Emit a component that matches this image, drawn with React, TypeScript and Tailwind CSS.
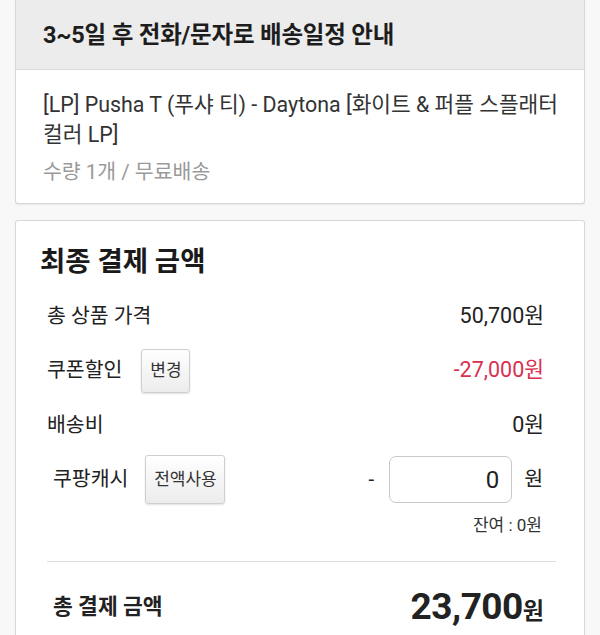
import React from 'react';

const btn =
  'rounded-[3px] border border-[#cfcfcf] bg-gradient-to-b from-white to-[#ececec] text-[17px] text-[#333] shadow-[0_1px_2px_rgba(0,0,0,0.12)] flex items-center justify-center';

export default function App() {
  return (
    <div className="min-h-screen bg-[#f8f8f8] px-[15px] font-['Roboto','Noto_Sans_CJK_KR',sans-serif] text-[#222]">
      {/* delivery card */}
      <div className="rounded-b-[3px] border border-t-0 border-[#d6d6d6] bg-white shadow-[0_1px_2px_rgba(0,0,0,0.06)]">
        <div className="flex h-[70px] items-center border-b border-[#dadada] bg-[#ececec] px-[27px] pt-[2px] text-[23.5px] font-bold tracking-[-0.2px] text-[#1d1d1d]">
          3~5일 후 전화/문자로 배송일정 안내
        </div>
        <div className="pt-[20px] pr-[18px] pb-[17px] pl-[27px]">
          <p className="text-[21.4px] leading-[30px] break-keep text-[#333]">
            [LP] Pusha T (푸샤 티) - Daytona [화이트 &amp; 퍼플 스플래터 컬러 LP]
          </p>
          <p className="mt-[8px] text-[20.5px] leading-[28px] text-[#9a9a9a]">수량 1개 / 무료배송</p>
        </div>
      </div>

      {/* payment card */}
      <div className="mt-[16px] rounded-[3px] border border-[#d6d6d6] bg-white pt-[23px] pr-[40px] pl-[24px] shadow-[0_1px_2px_rgba(0,0,0,0.06)]">
        <h2 className="text-[27.5px] leading-[36px] font-bold text-[#1a1a1a]">최종 결제 금액</h2>

        <div className="mt-[9px] flex h-[54px] items-center justify-between pl-[7px] text-[20.5px]">
          <span>총 상품 가격</span>
          <span className="text-[21.5px]">50,700원</span>
        </div>

        <div className="flex h-[55px] items-center justify-between pl-[7px] text-[20.5px]">
          <div className="flex items-center">
            <span>쿠폰할인</span>
            <button className={`${btn} ml-[19px] h-[44px] w-[49px]`}>변경</button>
          </div>
          <span className="text-[21.5px] text-[#d9304f]">-27,000원</span>
        </div>

        <div className="flex h-[55px] items-center justify-between pl-[7px] text-[20.5px]">
          <span>배송비</span>
          <span className="text-[21.5px]">0원</span>
        </div>

        <div className="mt-[2px] flex h-[49px] items-center justify-between pl-[13px] text-[20.5px]">
          <div className="flex items-center">
            <span>쿠팡캐시</span>
            <button className={`${btn} ml-[17px] h-[49px] w-[80px]`}>전액사용</button>
          </div>
          <div className="flex items-center">
            <span className="mr-[15px]">-</span>
            <div className="flex h-[47px] w-[123px] items-center justify-end rounded-[7px] border border-[#c9c9c9] pr-[12px] text-[24px]">
              0
            </div>
            <span className="ml-[12px] mr-[1px]">원</span>
          </div>
        </div>

        <div className="mt-[7px] flex h-[30px] items-center justify-end pr-[2px] text-[17px] text-[#333]">
          잔여 : 0원
        </div>

        <div className="mt-[20px] ml-[7px] -mr-[12px] border-t border-[#dedede]" />

        <div className="flex h-[90px] items-center justify-between pl-[13px]">
          <span className="text-[21.5px] font-bold">총 결제 금액</span>
          <span className="flex items-baseline font-bold">
            <span className="text-[37px] tracking-[-0.5px]">23,700</span>
            <span className="text-[23px]">원</span>
          </span>
        </div>
      </div>
    </div>
  );
}
